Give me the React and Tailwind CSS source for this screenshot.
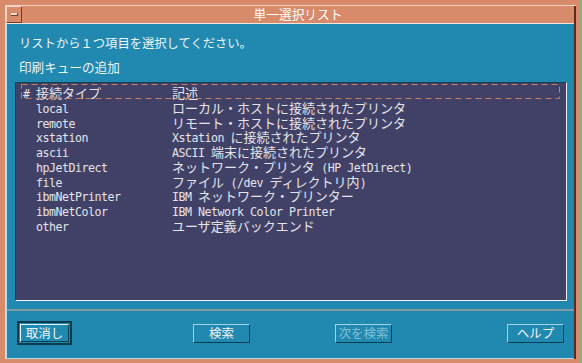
import React from 'react';

const ROWS = [
  ['local', 'ローカル・ホストに接続されたプリンタ'],
  ['remote', 'リモート・ホストに接続されたプリンタ'],
  ['xstation', 'Xstation に接続されたプリンタ'],
  ['ascii', 'ASCII 端末に接続されたプリンタ'],
  ['hpJetDirect', 'ネットワーク・プリンタ (HP JetDirect)'],
  ['file', 'ファイル (/dev ディレクトリ内)'],
  ['ibmNetPrinter', 'IBM ネットワーク・プリンター'],
  ['ibmNetColor', 'IBM Network Color Printer'],
  ['other', 'ユーザ定義バックエンド'],
];

// ascii runs use the narrow mono face, the rest uses the CJK face
const Mixed = ({ text }) => {
  const parts = text.match(/[\x20-\x7e]+|[^\x20-\x7e]+/g) || [];
  return parts.map((p, i) =>
    /^[\x20-\x7e]/.test(p) ? (
      <span key={i} className="inline-block h-[13px] leading-[13px] [font-family:'DejaVu_Sans_Mono',monospace] text-[11.6px] tracking-[-0.48px] whitespace-pre">{p}</span>
    ) : (
      <span key={i} className="inline-block h-[13px] leading-[13px] [font-family:'Noto_Sans_CJK_JP',sans-serif] text-[13px]">{p}</span>
    )
  );
};

const Button = ({ children, disabled }) => (
  <div className="w-[57px] h-[19px] flex items-center justify-center border border-t-[#9fd3e6] border-l-[#9fd3e6] border-b-[#0b3f52] border-r-[#0b3f52] bg-[#2189b0]">
    <span className={`text-[12.5px] leading-none [font-family:'Noto_Sans_CJK_JP',sans-serif] ${disabled ? 'text-[#a9d6e6] opacity-70' : 'text-[#f2f2f2]'}`}>
      {children}
    </span>
  </div>
);

const App = () => {
  return (
    <div className="w-[582px] h-[363px] bg-[#d88b6b] flex overflow-hidden [font-family:'Noto_Sans_CJK_JP',sans-serif]">
      <div className="flex-1 flex flex-col pt-[5px] pl-[5px] pb-[4px] pr-[4px]">
        <div className="flex-1 flex flex-col border-t border-l border-[#f3d2c2]">
          <div className="flex-1 flex flex-col border-r-2 border-r-[#5b2c1a]">
            {/* Title bar */}
            <div className="h-[18px] flex border-b border-[#f5e6de]">
              <div className="w-[16px] h-[17px] border border-t-[#f6d4c4] border-l-[#f6d4c4] border-b-[#7a3c24] border-r-[#7a3c24] flex items-center justify-center">
                <div className="w-[7px] h-[3px] bg-[#f6e2d8] border-b border-r border-[#7a3c24]"></div>
              </div>
              <div className="flex-1 flex items-center justify-center text-white text-[12.7px] leading-none">
                単一選択リスト
              </div>
            </div>

            {/* Body */}
            <div className="flex-1 flex flex-col bg-[#2189b0] border-l border-[#b5dcea] border-b border-b-[#b5dcea]">
              <div className="pl-[12px] pt-[12px] text-[#eef4f6] text-[12.3px] leading-[14px]">
                リストから１つ項目を選択してください。
              </div>
              <div className="pl-[12px] pt-[10px] text-[#eef4f6] text-[12.6px] leading-[14px]">
                印刷キューの追加
              </div>

              <div className="ml-[8px] mr-[7px] mt-[8px] h-[219px] bg-[#414167] border border-t-[#0d4456] border-l-[#0d4456] border-b-[#eef2f4] border-r-[#eef2f4] pt-[1px] pl-[7px] text-[#e4e4ea]">
                <div className="relative h-[15px] flex items-center">
                  <svg className="absolute left-[-2px] top-0 w-[539px] h-[15px]" viewBox="0 0 539 15">
                    <rect x="0.5" y="0.5" width="538" height="14" fill="none" stroke="#c47f5e" strokeWidth="1" strokeDasharray="6 4" />
                  </svg>
                  <div className="w-[149px] h-[13px] leading-[13px]"><Mixed text="# 接続タイプ" /></div>
                  <div className="h-[13px] leading-[13px]"><Mixed text="記述" /></div>
                </div>
                {ROWS.map(([name, desc]) => (
                  <div key={name} className="h-[14.75px] flex items-center whitespace-nowrap">
                    <div className="w-[149px] h-[13px] leading-[13px]"><Mixed text={'  ' + name} /></div>
                    <div className="h-[13px] leading-[13px]"><Mixed text={desc} /></div>
                  </div>
                ))}
              </div>

              <div className="mt-[8px] border-t-2 border-[#7f9ba4]"></div>

              <div className="flex items-center pl-[10px] pt-[10px]">
                <div className="w-[55px] h-[24px] border-2 border-[#0b3b4c] flex items-center justify-center">
                  <div className="w-[49px] h-[18px] flex items-center justify-center border border-t-[#e6f4f8] border-l-[#e6f4f8] border-b-[#0b3f52] border-r-[#0b3f52]">
                    <span className="text-[12.5px] leading-none text-[#f2f2f2]">取消し</span>
                  </div>
                </div>
                <div className="ml-[121px]"><Button>検索</Button></div>
                <div className="ml-[85px]"><Button disabled>次を検索</Button></div>
                <div className="ml-[115px]"><Button>ヘルプ</Button></div>
              </div>
            </div>
          </div>
        </div>
      </div>
      <div className="w-[2px] bg-[#8fae86]"></div>
    </div>
  );
};

export default App;
